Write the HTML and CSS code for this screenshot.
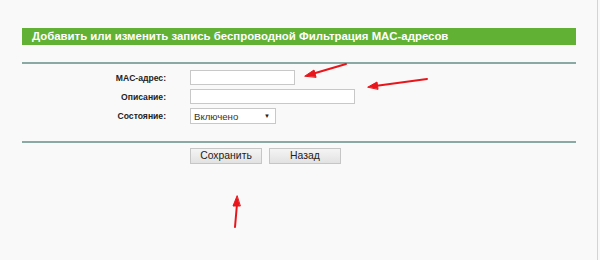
FILE: index.html
```html
<!DOCTYPE html>
<html lang="ru">
<head>
<meta charset="utf-8">
<link rel="stylesheet" href="styles.css">
</head>
<body>
<div class="page">
  <div class="panel">
    <div class="title">Добавить или изменить запись беспроводной Фильтрация MAC-адресов</div>
    <div class="rule"></div>
    <div class="form">
      <label class="lbl">MAC-адрес:</label>
      <div class="field"><input class="inp inp-mac" type="text"></div>
      <label class="lbl">Описание:</label>
      <div class="field"><input class="inp inp-desc" type="text"></div>
      <label class="lbl">Состояние:</label>
      <div class="field"><div class="select"><span>Включено</span><span class="caret">▼</span></div></div>
    </div>
    <div class="rule rule-bottom"></div>
    <div class="buttons">
      <button class="btn btn-save">Сохранить</button>
      <button class="btn btn-back">Назад</button>
    </div>
  </div>
  <svg class="arrows" width="600" height="260" viewBox="0 0 600 260">
    <g stroke="#e8161b" stroke-width="2" stroke-linecap="round" fill="#e8161b">
      <line x1="346" y1="64" x2="312" y2="74"/>
      <polygon points="305,76 314,70 316,77" stroke-width="1"/>
      <line x1="427" y1="79" x2="375" y2="86"/>
      <polygon points="368,87 377,82 378,89" stroke-width="1"/>
      <line x1="235" y1="227" x2="237" y2="204"/>
      <polygon points="237,196 233,206 240,206" stroke-width="1"/>
    </g>
  </svg>
</div>
</body>
</html>
```
FILE: styles.css
```css
html, body {
  margin: 0;
  padding: 0;
  background: #f9f9f9;
}
.page {
  position: relative;
  width: 598px;
  height: 260px;
  border-right: 1px solid #d4d4d4;
  box-sizing: border-box;
  font-family: "Liberation Sans", Arial, sans-serif;
}
.panel {
  padding: 28px 0 0 22px;
  width: 554px;
}
.title {
  height: 17px;
  line-height: 17px;
  background: #61b135;
  color: #fff;
  font-weight: bold;
  font-size: 11.4px;
  padding-left: 10px;
}
.rule {
  margin-top: 17px;
  height: 2px;
  background: #8aa9a2;
}
.form {
  display: grid;
  grid-template-columns: 144px auto;
  column-gap: 24px;
  row-gap: 4px;
  margin-top: 6px;
  align-items: center;
}
.lbl {
  text-align: right;
  font-weight: bold;
  font-size: 8.6px;
  color: #222;
}
.field {
  display: flex;
}
.inp {
  height: 15px;
  box-sizing: border-box;
  border: 1px solid #c8c8c8;
  background: #fff;
  margin: 0;
  padding: 0;
}
.inp-mac { width: 105px; }
.inp-desc { width: 165px; }
.select {
  width: 86px;
  height: 16px;
  box-sizing: border-box;
  border: 1px solid #c8c8c8;
  background: #fff;
  display: flex;
  align-items: center;
  justify-content: space-between;
  padding: 0 5px 0 3px;
  font-size: 9.6px;
  color: #333;
}
.caret {
  font-size: 6px;
  color: #222;
}
.rule-bottom {
  margin-top: 17px;
}
.buttons {
  display: flex;
  gap: 7px;
  margin-top: 5px;
  padding-left: 168px;
}
.btn {
  height: 16px;
  width: 72px;
  box-sizing: border-box;
  border: 1px solid #c6c6c6;
  background: linear-gradient(#f4f4f4, #e2e2e2);
  font-family: "Liberation Sans", Arial, sans-serif;
  font-size: 10.4px;
  color: #222;
  padding: 0;
  line-height: 14px;
}
.arrows {
  position: absolute;
  left: 0;
  top: 0;
  pointer-events: none;
}
```
